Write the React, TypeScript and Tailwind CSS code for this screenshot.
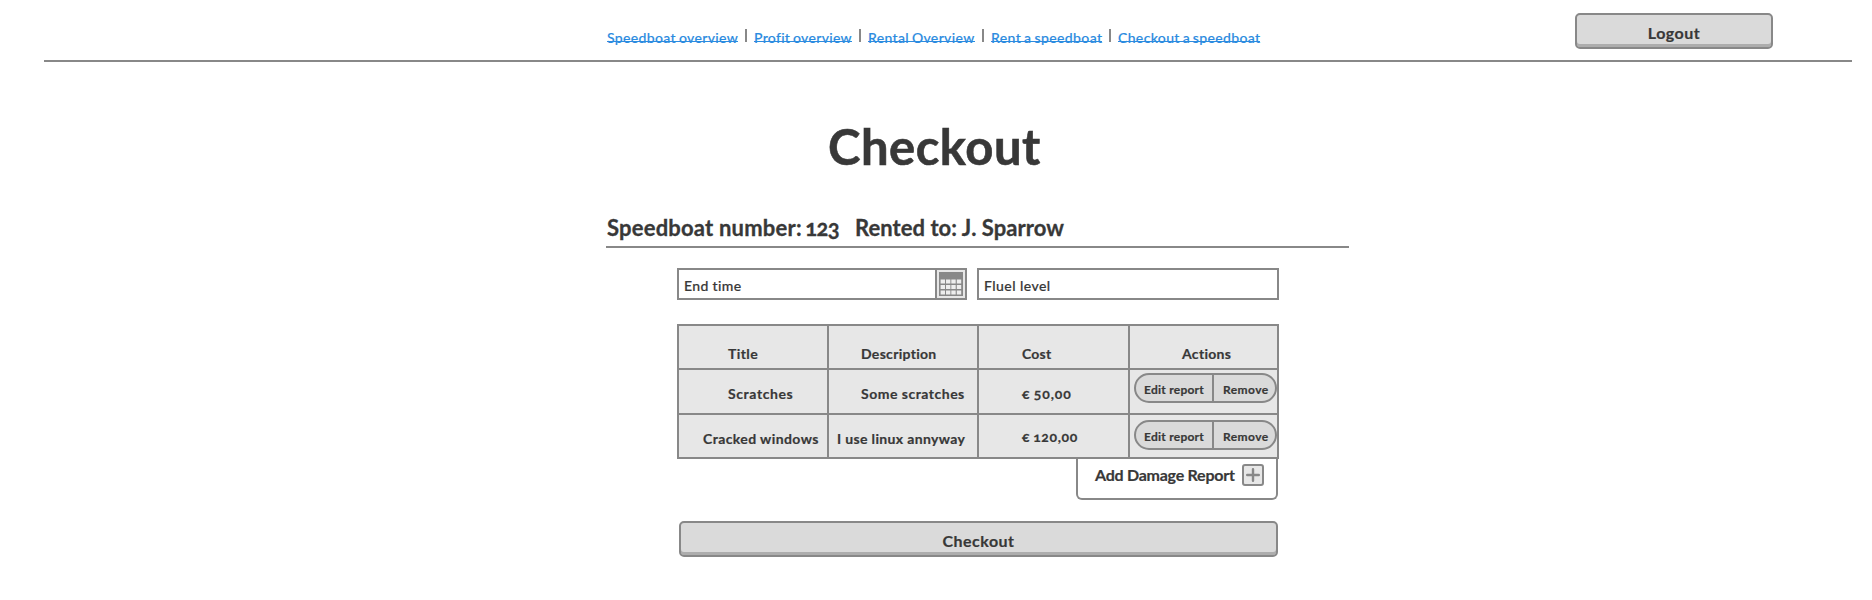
import type { ReactNode } from "react";

const links = [
  { label: "Speedboat overview", width: "w-[131px]", spacing: "tracking-[0.35px]" },
  { label: "Profit overview", width: "w-[98px]", spacing: "tracking-[0.3px]" },
  { label: "Rental Overview", width: "w-[107px]", spacing: "tracking-[0.35px]" },
  { label: "Rent a speedboat", width: "w-[111px]", spacing: "tracking-[0.4px]" },
  { label: "Checkout a speedboat", width: "w-[142px]", spacing: "tracking-[0.35px]" },
];

function NavLinks() {
  return (
    <nav className="flex h-[60px] items-start pl-[563px] pt-[28px]">
      {links.map((link, i) => (
        <div key={link.label} className="flex items-start">
          {i > 0 && <span className="ml-[7px] mr-[7px] mt-px h-[13px] w-[2px] bg-[#888888]" />}
          <a
            href="#"
            className={`relative block whitespace-nowrap text-[14px] font-medium leading-[20px] text-[#2b8be0] [-webkit-text-stroke:0.15px_#2b8be0] [word-spacing:-1px] ${link.width} ${link.spacing}`}
          >
            {link.label}
            <span className="absolute left-0 top-[13px] h-px w-full bg-[#2b8be0]" />
          </a>
        </div>
      ))}
    </nav>
  );
}

function Button({ children, className }: { children: ReactNode; className: string }) {
  return (
    <button
      className={`flex h-[36px] justify-center rounded-[5px] border-2 border-[#888888] bg-[#dadada] pt-[6px] text-[16px] font-bold leading-[24px] tracking-[0.5px] shadow-[inset_0_-3px_0_#adadad] [-webkit-text-stroke:0.2px_#383838] ${className}`}
    >
      {children}
    </button>
  );
}

function CalendarIcon() {
  return (
    <svg width="24" height="24" viewBox="0 0 24 24" className="block">
      <rect width="24" height="24" fill="#888888" />
      {[7.5, 13, 18.5].map((y) =>
        [1.6, 7, 12.3, 17.8].map((x) => (
          <rect key={`${x}-${y}`} x={x} y={y} width="4.4" height="4" fill="#ededed" />
        )),
      )}
    </svg>
  );
}

function ActionPill() {
  return (
    <div className="flex h-[30px] w-[143px] rounded-full border-2 border-[#888888] bg-[#dadada] text-[12px] font-bold leading-[16px]">
      <button className="w-[78px] whitespace-nowrap border-r-2 border-[#888888] pl-[8px] pt-[3px] text-left tracking-[0.25px]">
        Edit report
      </button>
      <button className="whitespace-nowrap pl-[9px] pt-[3px] text-left tracking-[0.45px]">Remove</button>
    </div>
  );
}

export default function App() {
  return (
    <div className="h-[600px] w-[1872px] overflow-hidden bg-white font-['Lato',sans-serif] text-[#383838]">
      <header className="ml-[44px] flex h-[62px] w-[1808px] justify-between border-b-2 border-[#888888]">
        <NavLinks />
        <Button className="mr-[79px] mt-[13px] w-[198px]">Logout</Button>
      </header>

      <h1 className="ml-[828px] mt-[54px] whitespace-nowrap text-[49px] font-bold leading-[60px] tracking-[0.5px] [-webkit-text-stroke:0.6px_#383838]">
        Checkout
      </h1>

      <section className="ml-[606px] mt-[36px] flex h-[36px] w-[743px] border-b-2 border-[#888888] pt-px text-[22px] font-bold leading-[30px] oldstyle-nums [-webkit-text-stroke:0.3px_#383838]">
        <span className="w-[249px] whitespace-nowrap pl-px tracking-[0.2px]">
          Speedboat number: <span className="-ml-[2px] tracking-[-0.7px]">123</span>
        </span>
        <span className="whitespace-nowrap tracking-[0.05px]">Rented to: J. Sparrow</span>
      </section>

      <main className="ml-[677px] w-[602px]">
        <div className="mt-[20px] flex gap-[10px] text-[14px] font-medium leading-[20px] [-webkit-text-stroke:0.2px_#383838]">
          <div className="flex h-[32px] w-[290px] border-2 border-[#888888]">
            <span className="w-[256px] pl-[5px] pt-[6px] tracking-[0.35px]">End time</span>
            <span className="flex w-[30px] items-center justify-center border-l-2 border-[#888888] bg-[#e7e7e7]">
              <CalendarIcon />
            </span>
          </div>
          <div className="h-[32px] w-[302px] border-2 border-[#888888] pl-[5px] pt-[6px] tracking-[0.45px]">
            Fluel level
          </div>
        </div>

        <div className="mt-[24px] grid h-[135px] grid-cols-[148px_148px_149px_147px] grid-rows-[42px_43px_42px] gap-x-[2px] gap-y-[2px] border-2 border-[#888888] bg-[#888888] text-[14px] font-bold leading-[20px] oldstyle-nums [-webkit-text-stroke:0.2px_#383838] *:whitespace-nowrap *:bg-[#e7e7e7]">
          <div className="pl-[49px] pt-[18px] tracking-[0.4px]">Title</div>
          <div className="pl-[32px] pt-[18px] tracking-[0.3px]">Description</div>
          <div className="pl-[43px] pt-[18px] tracking-[0.2px]">Cost</div>
          <div className="pl-[52px] pt-[18px] tracking-[0.3px]">Actions</div>

          <div className="pl-[49px] pt-[14px] tracking-[0.6px]">Scratches</div>
          <div className="pl-[32px] pt-[14px] tracking-[0.5px]">Some scratches</div>
          <div className="pl-[43px] pt-[14px] tracking-[0.9px] [word-spacing:-1px]">€ 50,00</div>
          <div className="pl-[4px] pt-[3px]">
            <ActionPill />
          </div>

          <div className="pl-[24px] pt-[14px] tracking-[0.4px]">Cracked windows</div>
          <div className="pl-[8px] pt-[14px] tracking-[0.35px]">I use linux annyway</div>
          <div className="pl-[43px] pt-[12px] tracking-[0.6px] [word-spacing:-1px]">€ 120,00</div>
          <div className="pl-[4px] pt-[5px]">
            <ActionPill />
          </div>
        </div>

        <div className="ml-[399px] flex h-[41px] w-[202px] rounded-b-[6px] border-2 border-t-0 border-[#888888] pl-[17px] text-[16px] font-bold leading-[24px]">
          <span className="w-[147px] whitespace-nowrap pt-[4px] tracking-[-0.25px] [-webkit-text-stroke:0.2px_#383838]">
            Add Damage Report
          </span>
          <button className="mt-[5px] flex h-[22px] w-[22px] items-center justify-center rounded-[3px] border-2 border-[#888888] bg-[#e7e7e7]">
            <svg width="14" height="14" viewBox="0 0 14 14">
              <path d="M7 1.2v11.6M1.2 7h11.6" stroke="#888888" strokeWidth="2.4" strokeLinecap="round" />
            </svg>
          </button>
        </div>

        <Button className="ml-[2px] mt-[21px] w-[599px]">Checkout</Button>
      </main>
    </div>
  );
}
